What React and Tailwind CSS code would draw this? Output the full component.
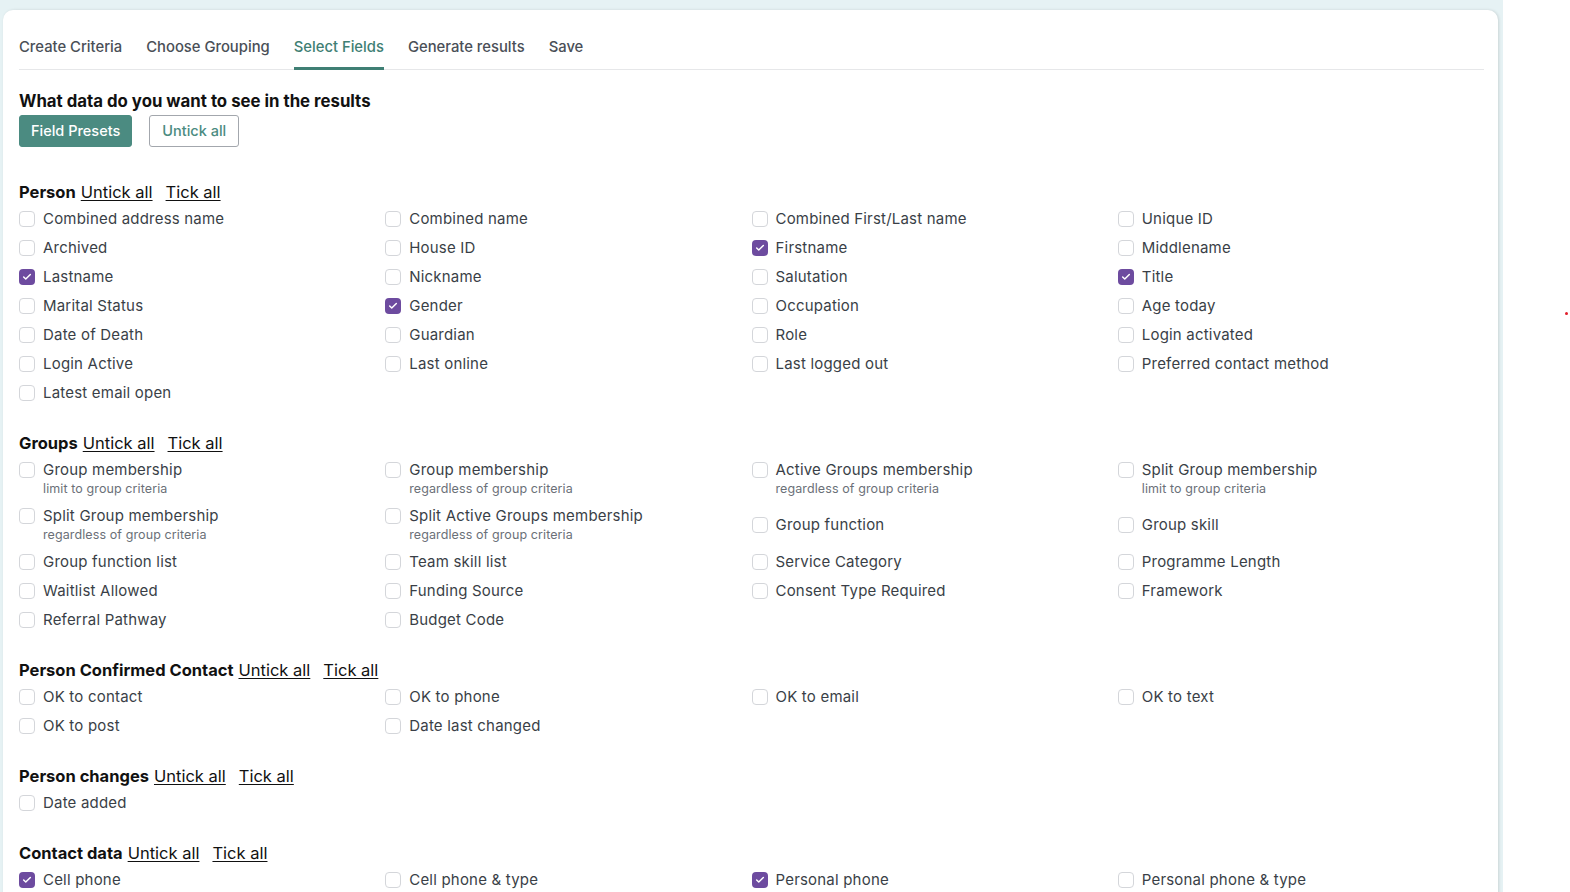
import { Check } from "lucide-react";

const font = { fontFamily: "Inter, 'Noto Sans', sans-serif" };

const sections = [
  {
    title: "Person",
    fields: [
      ["Combined address name"], ["Combined name"], ["Combined First/Last name"], ["Unique ID"],
      ["Archived"], ["House ID"], ["Firstname", null, true], ["Middlename"],
      ["Lastname", null, true], ["Nickname"], ["Salutation"], ["Title", null, true],
      ["Marital Status"], ["Gender", null, true], ["Occupation"], ["Age today"],
      ["Date of Death"], ["Guardian"], ["Role"], ["Login activated"],
      ["Login Active"], ["Last online"], ["Last logged out"], ["Preferred contact method"],
      ["Latest email open"],
    ],
  },
  {
    title: "Groups",
    fields: [
      ["Group membership", "limit to group criteria"],
      ["Group membership", "regardless of group criteria"],
      ["Active Groups membership", "regardless of group criteria"],
      ["Split Group membership", "limit to group criteria"],
      ["Split Group membership", "regardless of group criteria"],
      ["Split Active Groups membership", "regardless of group criteria"],
      ["Group function"], ["Group skill"],
      ["Group function list"], ["Team skill list"], ["Service Category"], ["Programme Length"],
      ["Waitlist Allowed"], ["Funding Source"], ["Consent Type Required"], ["Framework"],
      ["Referral Pathway"], ["Budget Code"],
    ],
  },
  {
    title: "Person Confirmed Contact",
    fields: [
      ["OK to contact"], ["OK to phone"], ["OK to email"], ["OK to text"],
      ["OK to post"], ["Date last changed"],
    ],
  },
  {
    title: "Person changes",
    fields: [["Date added"]],
  },
  {
    title: "Contact data",
    fields: [
      ["Cell phone", null, true], ["Cell phone & type"], ["Personal phone", null, true], ["Personal phone & type"],
    ],
  },
];

const tabs = ["Create Criteria", "Choose Grouping", "Select Fields", "Generate results", "Save"];

function Checkbox({ checked }) {
  return checked ? (
    <span className="w-4 h-4 mt-[2px] shrink-0 rounded-[4px] bg-[#6d4b9f] flex items-center justify-center">
      <Check size={10} strokeWidth={3.5} color="white" />
    </span>
  ) : (
    <span className="w-4 h-4 mt-[2px] shrink-0 rounded-[4px] border border-[#d4d6da] bg-white" />
  );
}

function Field({ label, sub, checked }) {
  return (
    <div className="flex items-start gap-2">
      <Checkbox checked={checked} />
      <div className="flex flex-col">
        <span className="text-[15px] leading-5 tracking-[0.2px] text-[#3a3f47]">{label}</span>
        {sub && <span className="text-[12.5px] leading-4 tracking-[0.1px] text-[#6b7078] mt-px">{sub}</span>}
      </div>
    </div>
  );
}

function Section({ title, fields, first }) {
  return (
    <div className={first ? "mt-[33px]" : "mt-[28px]"}>
      <div className="flex items-center h-6 text-[16.5px] text-[#111]">
        <span className="font-bold mr-[5px]">{title}</span>
        <span className="underline underline-offset-2 mr-[13px] cursor-pointer">Untick all</span>
        <span className="underline underline-offset-2 cursor-pointer">Tick all</span>
      </div>
      <div className="grid grid-cols-4 gap-y-[9px] items-center mt-[5px]">
        {fields.map(([label, sub, checked], i) => (
          <Field key={i} label={label} sub={sub} checked={checked} />
        ))}
      </div>
    </div>
  );
}

export default function App() {
  return (
    <div className="flex min-h-screen bg-white" style={font}>
      <div className="w-[1503px] shrink-0 bg-[#e6f2f4] pt-[10px] pl-[3px] pr-[5px]">
        <div className="bg-white rounded-t-[10px] shadow-[1px_0_3px_rgba(0,0,0,0.12)] pt-[27px] pl-[16px] pr-[14px] pb-10">
          <div className="flex gap-6 border-b border-[#e6e7e9]">
            {tabs.map((t) =>
              t === "Select Fields" ? (
                <div key={t} className="pb-[9px] -mb-px border-b-[3px] border-[#3f7f74] text-[14.8px] leading-5 font-medium text-[#3f7f74]">
                  {t}
                </div>
              ) : (
                <div key={t} className="pb-[12px] text-[14.8px] leading-5 font-medium text-[#4a4f57]">
                  {t}
                </div>
              )
            )}
          </div>
          <h2 className="mt-[19px] text-[16.8px] leading-6 font-bold text-[#111]">
            What data do you want to see in the results
          </h2>
          <div className="flex gap-[17px] mt-[2px]">
            <button className="h-8 px-[11px] rounded-[3px] bg-[#4b8b81] border border-[#4b8b81] text-white text-[14.5px] font-medium">
              Field Presets
            </button>
            <button className="h-8 px-3 rounded-[3px] bg-white border border-[#a3a7ad] text-[#4b8b81] text-[14.5px] font-medium">
              Untick all
            </button>
          </div>
          {sections.map((s, i) => (
            <Section key={s.title} title={s.title} fields={s.fields} first={i === 0} />
          ))}
        </div>
      </div>
      <div className="flex-1">
        <div className="mt-[312px] ml-[62px] w-[3px] h-[3px] rounded-full bg-[#e11d2a]" />
      </div>
    </div>
  );
}
